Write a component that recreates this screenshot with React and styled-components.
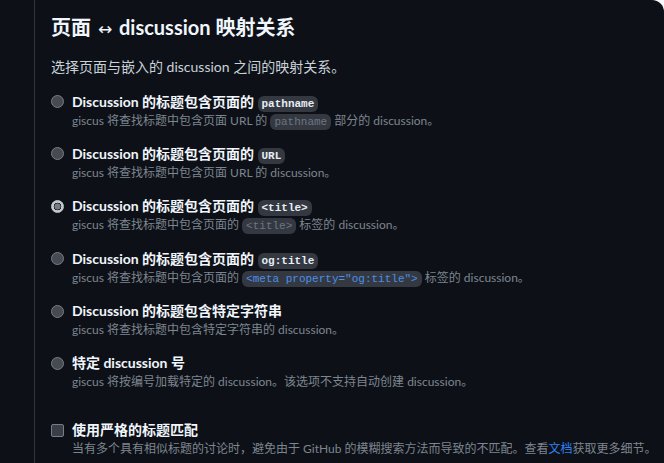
import React from "react";
import styled, { createGlobalStyle } from "styled-components";

const GlobalStyle = createGlobalStyle`
  html, body {
    margin: 0;
    padding: 0;
    background: #f6f8fa;
  }
  body {
    font-family: Lato, "Noto Sans CJK SC", sans-serif;
  }
`;

const Page = styled.div`
  display: flex;
  width: 664px;
  height: 463px;
  background: #0d1117;
  border-top-right-radius: 12px;
  overflow: hidden;
`;

const Rail = styled.div`
  width: 34px;
  flex-shrink: 0;
  border-right: 1px solid #30363d;
`;

const Main = styled.div`
  flex: 1;
  padding: 12px 0 0 16px;
  color: #c9d1d9;
`;

const Heading = styled.h2`
  margin: 0;
  height: 30px;
  font-size: 20px;
  line-height: 30px;
  font-weight: 700;
  color: #f0f6fc;
  white-space: nowrap;
`;

const Arrow = styled.span`
  font-family: "DejaVu Sans", sans-serif;
  font-weight: 400;
  font-size: 17px;
  margin: 0 2px;
`;

const Lead = styled.p`
  margin: 14px 0 0;
  height: 21px;
  font-size: 14px;
  line-height: 21px;
  color: #c9d1d9;
`;

const Options = styled.div`
  display: flex;
  flex-direction: column;
  gap: 14.4px;
  margin-top: 14.5px;
`;

const Option = styled.label`
  display: flex;
  align-items: flex-start;
  gap: 8px;
`;

const Radio = styled.span`
  width: 13px;
  height: 13px;
  margin-top: 3.5px;
  flex-shrink: 0;
  box-sizing: border-box;
  border-radius: 50%;
  border: 1px solid #767d86;
  background: ${(p) =>
    p.checked
      ? "radial-gradient(circle, #767c84 0 2.8px, #1c2027 3.3px 3.6px, #c3c8ce 4.1px)"
      : "#464b53"};
  ${(p) => p.checked && "border-color: #c3c8ce;"}
`;

const Check = styled.span`
  width: 13px;
  height: 13px;
  margin-top: 3.5px;
  flex-shrink: 0;
  box-sizing: border-box;
  border-radius: 2px;
  border: 1px solid #767d86;
  background: #3a3f47;
`;

const Body = styled.div`
  display: flex;
  flex-direction: column;
`;

const Label = styled.div`
  height: 20px;
  font-size: 14px;
  line-height: 20px;
  font-weight: 700;
  color: #f0f6fc;
  white-space: nowrap;
`;

const Desc = styled.div`
  height: 18px;
  font-size: 12px;
  line-height: 18px;
  color: #7d8590;
  white-space: nowrap;
`;

const Code = styled.code`
  font-family: "Liberation Mono", "DejaVu Sans Mono", monospace;
  font-size: 11px;
  line-height: 1;
  font-weight: ${(p) => (p.strong ? 700 : 400)};
  padding: 2px 4px;
  border-radius: 6px;
  background: #343941;
  color: ${(p) => (p.blue ? "#4c8ee8" : p.strong ? "#e6edf3" : "#6e7681")};
`;

const Link = styled.a`
  color: #2f81f7;
  text-decoration: none;
`;

const Strict = styled(Option)`
  margin-top: 29px;
`;

const options = [
  {
    label: <>Discussion 的标题包含页面的 <Code strong>pathname</Code></>,
    desc: <>giscus 将查找标题中包含页面 URL 的 <Code>pathname</Code> 部分的 discussion。</>,
  },
  {
    label: <>Discussion 的标题包含页面的 <Code strong>URL</Code></>,
    desc: <>giscus 将查找标题中包含页面 URL 的 discussion。</>,
  },
  {
    label: <>Discussion 的标题包含页面的 <Code strong>&lt;title&gt;</Code></>,
    desc: <>giscus 将查找标题中包含页面的 <Code>&lt;title&gt;</Code> 标签的 discussion。</>,
    checked: true,
  },
  {
    label: <>Discussion 的标题包含页面的 <Code strong>og:title</Code></>,
    desc: (
      <>
        giscus 将查找标题中包含页面的 <Code blue>&lt;meta property="og:title"&gt;</Code> 标签的 discussion。
      </>
    ),
  },
  {
    label: <>Discussion 的标题包含特定字符串</>,
    desc: <>giscus 将查找标题中包含特定字符串的 discussion。</>,
  },
  {
    label: <>特定 discussion 号</>,
    desc: <>giscus 将按编号加载特定的 discussion。该选项不支持自动创建 discussion。</>,
  },
];

export default function App() {
  return (
    <>
      <GlobalStyle />
      <Page>
        <Rail />
        <Main>
          <Heading>
            页面 <Arrow>↔</Arrow> discussion 映射关系
          </Heading>
          <Lead>选择页面与嵌入的 discussion 之间的映射关系。</Lead>
          <Options>
            {options.map((o, i) => (
              <Option key={i}>
                <Radio checked={o.checked} />
                <Body>
                  <Label>{o.label}</Label>
                  <Desc>{o.desc}</Desc>
                </Body>
              </Option>
            ))}
          </Options>
          <Strict>
            <Check />
            <Body>
              <Label>使用严格的标题匹配</Label>
              <Desc>
                当有多个具有相似标题的讨论时，避免由于 GitHub 的模糊搜索方法而导致的不匹配。查看
                <Link href="#">文档</Link>获取更多细节。
              </Desc>
            </Body>
          </Strict>
        </Main>
      </Page>
    </>
  );
}
